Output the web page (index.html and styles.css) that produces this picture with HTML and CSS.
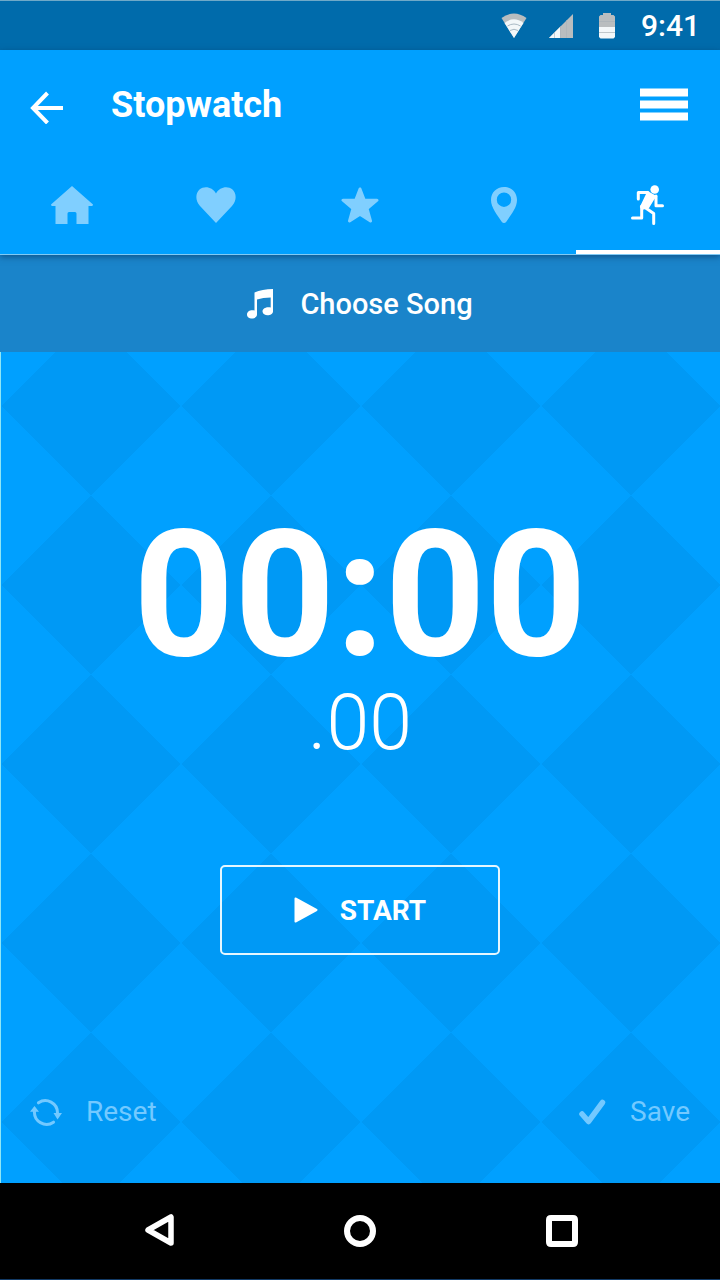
FILE: index.html
```html
<!DOCTYPE html>
<html lang="en">
<head>
<meta charset="utf-8">
<meta name="viewport" content="width=device-width, initial-scale=1">
<title>Stopwatch</title>
<link rel="stylesheet" href="styles.css">
</head>
<body>
<div class="app">
  <div class="status">
    <svg class="status-wifi" width="26" height="26" viewBox="0 0 26 26" aria-hidden="true">
      <path d="M0.500 5Q13-4 25.500 5L13 25z" fill="#b9bdbf"/>
      <path d="M3.500 10Q13 2.500 22.500 10L13 25z" fill="#f3f7f9"/>
      <path d="M6.500 13Q13 9 19.500 13M9 17.500Q13 15 17 17.500" fill="none" stroke="#a9b9c4"/>
    </svg>
    <svg class="status-signal" width="24" height="24" viewBox="0 0 24 24" aria-hidden="true">
      <path d="M24 0V24H0z" fill="#b9bdbf"/>
      <path d="M11 13V24H0z" fill="#f3f7f9"/>
      <path d="M5.500 18V24M11.500 12V24M17.500 6V24" stroke="#a9b1b8" stroke-width="0.600"/>
    </svg>
    <svg class="status-battery" width="16" height="26" viewBox="0 0 16 26" aria-hidden="true">
      <path d="M4 0H12V2H14.500L16 3.500V14H0V3.500L1.500 2H4z" fill="#b9bdbf"/>
      <path d="M0 14H16V24L14.500 25.500H1.500L0 24z" fill="#f3f7f9"/>
      <path d="M0 8.500H16M0 19.500H16" stroke="#a9b1b8" stroke-width="0.700"/>
    </svg>
    <time class="clock">9:41</time>
  </div>

  <header class="header">
    <div class="toolbar">
      <button class="icon-button" type="button" aria-label="Back">
        <svg width="34" height="38" viewBox="0 0 34 38" aria-hidden="true">
          <path d="M33 22H4M17.500 7L3 22L17.500 37" fill="none" stroke="#fff" stroke-width="4"/>
        </svg>
      </button>
      <h1 class="title">Stopwatch</h1>
      <button class="icon-button menu-button" type="button" aria-label="Menu">
        <svg width="48" height="34" viewBox="0 0 48 34" aria-hidden="true">
          <path d="M0 0.400H48V8.400H0zM0 12.400H48V20.400H0zM0 24.400H48V32.400H0z" fill="#fff"/>
        </svg>
      </button>
    </div>
    <nav class="tabs" aria-label="Sections">
      <a class="tab" href="#home" aria-label="Home">
        <svg width="42" height="38" viewBox="0 0 42 38" aria-hidden="true">
          <path d="M21 0L42 18.500Q42 20 40.500 20H37.500V38H25.500V27.500Q25.500 26 24 26H18Q16.500 26 16.500 27.500V38H4.500V20H1.500Q0 20 0 18.500z"/>
        </svg>
      </a>
      <a class="tab" href="#favourites" aria-label="Favourites">
        <svg width="40" height="36" viewBox="0 0 40 36" aria-hidden="true">
          <path d="M20 36L4 19C-1.500 13 0 5.500 3.500 2.500C8.500-1.500 16.500 0 20 6.500C23.500 0 31.500-1.500 36.500 2.500C40 5.500 41.500 13 36 19z"/>
        </svg>
      </a>
      <a class="tab" href="#starred" aria-label="Starred">
        <svg class="star" width="38" height="36" viewBox="0 0 38 36" aria-hidden="true">
          <path d="M19 2L23.300 13.200H36L26 21.500L29.500 34L19 27.300L8.500 34L12 21.500L2 13.200H14.700z"/>
        </svg>
      </a>
      <a class="tab" href="#places" aria-label="Places">
        <svg width="28" height="38" viewBox="0 0 28 38" aria-hidden="true">
          <path fill-rule="evenodd" d="M14 1C21.500 1 27 6.500 27 14C27 22 20.500 29 16.500 35.500Q14 38.500 11.500 35.500C7.500 29 1 22 1 14C1 6.500 6.500 1 14 1zM14 6.500A7.200 7.200 0 1 0 14 20.900A7.200 7.200 0 1 0 14 6.500z"/>
        </svg>
      </a>
      <a class="tab tab-active" href="#run" aria-label="Run" aria-current="page">
        <svg width="36" height="42" viewBox="0 0 36 42" aria-hidden="true">
          <circle cx="24.700" cy="5.500" r="4.300"/>
          <path d="M17 6.800L27.500 12.500L24.500 15L19 24L12 26L9.800 23L16 10z"/>
          <path class="limb" d="M8.300 15L8.300 8.600H18M26 12V21.700H32.500M11.700 22V34H2.500M15 23.500L23.700 29.500V39.500"/>
        </svg>
      </a>
    </nav>
  </header>

  <button class="song" type="button">
    <svg width="26" height="30" viewBox="0 0 26 30" aria-hidden="true">
      <path d="M7.500 3.500Q15 0.200 26 0V22.500C26 27 16 28 15.500 22.500C15.500 19 20 17.500 23.700 18.500V8.500Q16 8.500 10 10.500V25.500C10 30.500 0 31 0 25.500C0 21.500 4.500 20.500 7.500 21.500z" fill="#fff"/>
    </svg>
    <span>Choose Song</span>
  </button>

  <main class="stopwatch">
    <div class="time" role="timer">
      <div class="time-main">00:00</div>
      <div class="time-fraction">.00</div>
    </div>
    <button class="start" type="button">
      <svg width="24" height="26" viewBox="0 0 24 26" aria-hidden="true">
        <path d="M1.500 1.500L22.500 13L1.500 24.500z" fill="#fff" stroke="#fff" stroke-width="2" stroke-linejoin="round"/>
      </svg>
      <span>START</span>
    </button>
    <div class="actions">
      <button class="action" type="button">
        <svg width="32" height="30" viewBox="0 0 32 30" aria-hidden="true">
          <path d="M8.500 5.800A12.200 12.200 0 0 1 27.500 16M23.500 25.200A12.200 12.200 0 0 1 4.500 14" fill="none" stroke="currentColor" stroke-width="3" stroke-linecap="round"/>
          <path d="M23.500 16H32L27.500 22.500zM0 14.800L4.500 9L9 14.800z" fill="currentColor"/>
        </svg>
        <span>Reset</span>
      </button>
      <button class="action" type="button">
        <svg width="28" height="28" viewBox="0 0 28 28" aria-hidden="true">
          <path d="M4 16L10.500 23.500L24.500 4.500" fill="none" stroke="currentColor" stroke-width="5.500" stroke-linecap="round" stroke-linejoin="round"/>
        </svg>
        <span>Save</span>
      </button>
    </div>
  </main>

  <nav class="system" aria-label="System">
    <button class="icon-button" type="button" aria-label="System back">
      <svg width="32" height="34" viewBox="0 0 32 34" aria-hidden="true">
        <path d="M29 3V29L6 16z" fill="none" stroke="#fff" stroke-width="5.500" stroke-linejoin="round"/>
      </svg>
    </button>
    <button class="icon-button" type="button" aria-label="System home">
      <svg width="32" height="32" viewBox="0 0 32 32" aria-hidden="true">
        <circle cx="16" cy="16" r="13" fill="none" stroke="#fff" stroke-width="6"/>
      </svg>
    </button>
    <button class="icon-button" type="button" aria-label="Recent apps">
      <svg width="32" height="32" viewBox="0 0 32 32" aria-hidden="true">
        <path fill-rule="evenodd" fill="#fff" d="M5 0H27Q32 0 32 5V27Q32 32 27 32H5Q0 32 0 27V5Q0 0 5 0zM6 6V26H26V6z"/>
      </svg>
    </button>
  </nav>
</div>
</body>
</html>
```
FILE: styles.css
```css
* {
  box-sizing: border-box;
}

body {
  margin: 0;
  background: #00a0ff;
  color: #fff;
  font-family: Roboto, "Liberation Sans", sans-serif;
}

button {
  margin: 0;
  padding: 0;
  border: 0;
  background: none;
  color: inherit;
  font: inherit;
  cursor: pointer;
}

svg {
  display: block;
  flex: none;
}

.app {
  display: flex;
  flex-direction: column;
  min-height: 100vh;
}

.status {
  display: flex;
  align-items: center;
  justify-content: flex-end;
  height: 50px;
  padding-right: 20px;
  border-top: 1px solid #6fa9c8;
  background: #006bab;
}

.status-wifi {
  margin-right: 22px;
}

.status-signal {
  margin-right: 26px;
}

.status-battery {
  margin-right: 26px;
}

.clock {
  font-size: 30px;
  font-weight: 500;
  line-height: 32px;
}

.header {
  position: relative;
  border-bottom: 1px solid #7fcaf5;
  background: #00a0ff;
  box-shadow: 0 2px 6px rgba(0, 40, 80, 0.5);
}

.toolbar {
  display: flex;
  align-items: center;
  height: 110px;
  padding: 0 32px 0 30px;
}

.icon-button {
  display: flex;
  align-items: center;
  justify-content: center;
}

.title {
  flex: 1;
  margin: 0 0 0 47px;
  font-size: 36px;
  font-weight: 700;
  line-height: 44px;
}

.tabs {
  display: grid;
  grid-template-columns: repeat(5, 1fr);
  height: 94px;
}

.tab {
  display: flex;
  align-items: center;
  justify-content: center;
  border-bottom: 4px solid transparent;
  color: #80cfff;
}

.tab svg {
  fill: currentColor;
}

.star {
  stroke: currentColor;
  stroke-width: 3px;
  stroke-linejoin: round;
}

.tab .limb {
  fill: none;
  stroke: currentColor;
  stroke-width: 3px;
  stroke-linecap: round;
  stroke-linejoin: round;
}

.tab-active {
  border-bottom-color: #fff;
  color: #fff;
}

.song {
  display: flex;
  align-items: center;
  justify-content: center;
  gap: 27px;
  height: 97px;
  background: #1a84ca;
  font-size: 29px;
  font-weight: 500;
}

.stopwatch {
  display: flex;
  flex: 1;
  flex-direction: column;
  align-items: center;
  padding: 155px 30px 54px 29px;
  border-left: 1px solid #8fe6f5;
  background-color: #00a0ff;
  background-image:
    linear-gradient(to top right, #0099f5 25%, transparent 25%, transparent 75%, #0099f5 75%),
    linear-gradient(to bottom right, #0099f5 25%, transparent 25%, transparent 75%, #0099f5 75%);
  background-position: 90px 54px;
  background-size: 180px 179px;
}

.time {
  text-align: center;
}

.time-main {
  font-size: 176px;
  font-weight: 700;
  line-height: 176px;
}

.time-fraction {
  margin-top: 2px;
  font-size: 77px;
  font-weight: 300;
  line-height: 76px;
}

.start {
  display: flex;
  align-items: center;
  justify-content: center;
  gap: 22px;
  width: 280px;
  height: 90px;
  margin-top: 104px;
  border: 2px solid #e5f7ff;
  border-radius: 5px;
  font-size: 28px;
  font-weight: 700;
}

.actions {
  display: flex;
  align-self: stretch;
  justify-content: space-between;
  margin-top: auto;
}

.action {
  display: flex;
  align-items: center;
  gap: 24px;
  color: #73c9ff;
  font-size: 28px;
  line-height: 34px;
}

.system {
  display: flex;
  align-items: center;
  justify-content: center;
  gap: 170px;
  height: 97px;
  border-bottom: 1px solid #123a66;
  background: #000;
}
```
